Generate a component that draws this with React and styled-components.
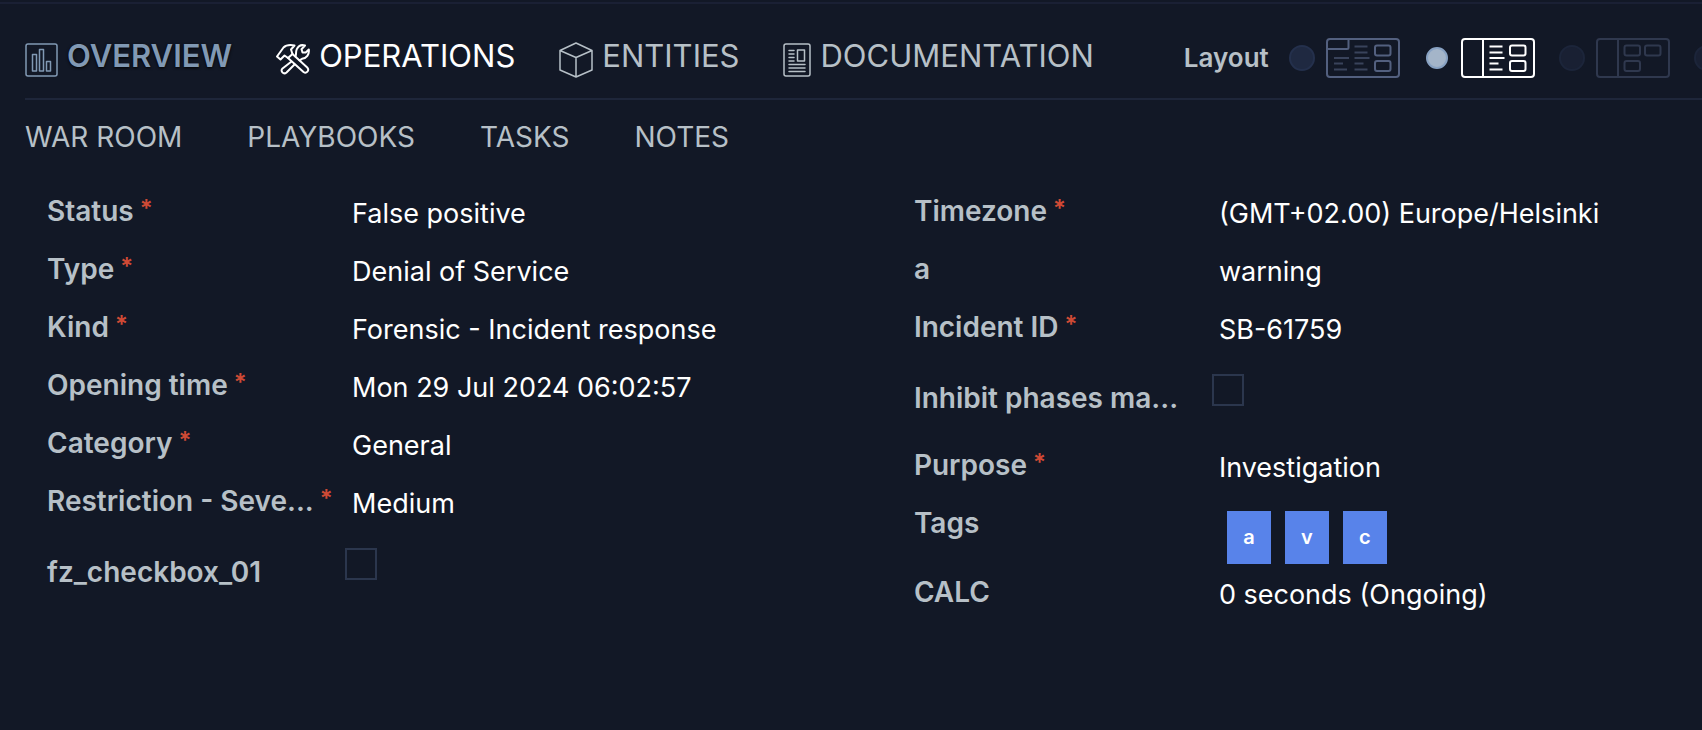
import React from 'react';
import styled, { createGlobalStyle } from 'styled-components';

const color = {
  page: '#121826',
  line: '#1e263a',
  muted: '#b7c0c7',
  accent: '#8199b4',
  required: '#cf4a35',
  box: '#2b364d',
  tag: '#5883ea',
};

const GlobalStyle = createGlobalStyle`
  * { box-sizing: border-box; }
  body {
    margin: 0;
    min-height: 100vh;
    overflow-x: hidden;
    background: ${color.page};
    color: #fff;
    font-family: Inter, Roboto, sans-serif;
  }
`;

const Page = styled.main`
  margin-top: 2px;
  border-top: 2px solid #1a2034;
  overflow: hidden;
`;

const Header = styled.header`
  display: flex;
  align-items: center;
  margin-left: 25px;
  padding: 14px 0 0;
  height: 96px;
  border-bottom: 2px solid ${color.line};
`;

const Tabs = styled.nav`
  display: flex;
  flex: none;
  gap: 44px;
`;

const Tab = styled.a`
  display: flex;
  align-items: center;
  gap: 9px;
  color: ${(p) => p.$color};
  font-size: 31px;
  line-height: 40px;
  font-weight: ${(p) => (p.$bold ? 600 : 400)};
  text-decoration: none;
  text-shadow: ${(p) => (p.$bold ? '0 1px 3px #000' : 'none')};
  white-space: nowrap;
`;

const TabIcon = styled.svg`
  flex: none;
  margin-top: 3px;
  height: 36px;
  width: ${(p) => p.$width}px;
  fill: none;
  stroke: currentColor;
  stroke-width: ${(p) => p.$stroke || 1.5};
  stroke-linejoin: round;
  stroke-linecap: round;
`;

const TabText = styled.span`
  padding-bottom: 4px;
`;

const LayoutPicker = styled.fieldset`
  display: flex;
  flex: none;
  align-items: center;
  gap: 24px;
  margin: 0 0 0 90px;
  padding: 0;
  border: 0;
`;

const LayoutTitle = styled.span`
  margin-right: -4px;
  color: ${color.muted};
  font-size: 26px;
  line-height: 32px;
  font-weight: 600;
`;

const LayoutOption = styled.label`
  display: flex;
  align-items: center;
  gap: 11px;
  color: ${(p) => p.$color};
`;

const Radio = styled.input`
  appearance: none;
  width: 26px;
  height: 26px;
  margin: 0;
  border: 2px solid #24304c;
  border-radius: 50%;
  background: #1f2941;

  &:checked {
    width: 22px;
    height: 22px;
    margin: 0 2px;
    border-color: #88a2c3;
    background: #a4b5c9;
  }

  &:disabled {
    border-color: #1c253a;
    background: #192033;
  }
`;

const LayoutDrawing = styled.svg`
  width: 74px;
  height: 40px;
  fill: none;
  stroke: currentColor;
  stroke-width: 2;
`;

const SubTabs = styled.nav`
  display: flex;
  gap: 65px;
  padding: 20px 0 40px 25px;
`;

const SubTab = styled.a`
  color: ${color.muted};
  font-size: 28px;
  line-height: 34px;
  text-decoration: none;
  white-space: nowrap;
`;

const Fields = styled.section`
  display: grid;
  grid-template-columns: minmax(0, 11fr) minmax(0, 10fr);
  padding-left: 47px;
`;

const Column = styled.div`
  display: flex;
  flex-direction: column;
`;

const rowHeight = { text: 58, check: 80, tags: 69 };

const Row = styled.div`
  display: grid;
  grid-template-columns: 298px minmax(0, 1fr);
  min-height: ${(p) => rowHeight[p.$kind]}px;
  align-items: start;
`;

const Label = styled.label`
  display: flex;
  align-items: flex-start;
  gap: 6px;
  padding-top: ${(p) => (p.$kind === 'check' ? 13 : 0)}px;
  color: ${color.muted};
  font-size: 28px;
  line-height: 34px;
  font-weight: 600;
  white-space: nowrap;
`;

const Required = styled.span`
  color: ${color.required};
  font-size: 24px;
  line-height: 30px;
`;

const Value = styled.output`
  padding: 3px 0 0 7px;
  font-size: 27px;
  line-height: 34px;
  white-space: nowrap;
`;

const Checkbox = styled.input`
  appearance: none;
  width: 32px;
  height: 32px;
  margin: 6px 0 0;
  border: 2px solid ${color.box};
  background: transparent;
`;

const TagList = styled.output`
  display: flex;
  gap: 14px;
  padding: 5px 0 0 15px;
`;

const Tag = styled.span`
  min-width: 44px;
  padding: 0 12px;
  background: ${color.tag};
  font-size: 20px;
  line-height: 53px;
  font-weight: 600;
  text-align: center;
`;

function OverviewIcon() {
  return (
    <TabIcon $width={33} viewBox="0 0 33 36" aria-hidden="true">
      <rect x="1" y="2" width="31" height="32" rx="2" />
      <path d="M7.5 12.5h4v16.5h-4zM14.5 7.5h4V29h-4zM21.5 19.5h4V29h-4z" />
    </TabIcon>
  );
}

function OperationsIcon() {
  return (
    <TabIcon $width={34} $stroke={2} viewBox="0 0 34 36" aria-hidden="true">
      <path d="M1 14.5 7.5 5.5C9.5 3.5 14 2.7 18.5 3.5L15 7.5 16.5 12 12 16 8.5 13.5 4.5 17.5z" />
      <path d="M16.5 12 31.5 25.8C33.5 28.5 30.5 32 27.5 30L12 16" />
      <path d="M15.5 19.5 6.500 26.5C3.8 29 7.5 33 10.500 30.5L18.500 22.500" />
      <path d="M19.500 14.500C20.5 12 19.5 10 20.800 7.200C22.300 4 25.500 2.500 29 3.500L25.500 7.200 26.500 10.500 29.700 10.500 32.800 7.500C33.500 12.500 30.500 16.500 26 16.800L23.500 18.300" />
    </TabIcon>
  );
}

function EntitiesIcon() {
  return (
    <TabIcon $width={34} viewBox="0 0 34 36" aria-hidden="true">
      <path d="M17 1 33 8.500V28L17 35 1 28V8.500zM1 8.500l16 7L33 8.500M17 15.500v19.500" />
    </TabIcon>
  );
}

function DocumentationIcon() {
  return (
    <TabIcon $width={28} viewBox="0 0 28 36" aria-hidden="true">
      <rect x="1" y="2" width="26" height="32" rx="2" />
      <path d="M14.5 8h7v11h-7zM6 8.5h5M6 12h5M6 15.5h5M6 19h5M6 22.5h16M6 26h16M6 29.5h16" />
    </TabIcon>
  );
}

function TabbedLayout() {
  return (
    <LayoutDrawing viewBox="0 0 74 40" aria-hidden="true">
      <rect x="1" y="1" width="72" height="38" rx="3" />
      <path d="M1 11h20q1.5 0 1.5-1.5V1" />
      <rect x="49" y="7.5" width="15.5" height="10" rx="2" />
      <rect x="49" y="23" width="15.5" height="10" rx="2" />
      <path strokeOpacity=".6" d="M8 20h15M8 25.5h9M8 31.5h13M28.5 8.5h13M28.5 14.5h13M28.5 20h15M28.5 25.5h9M28.5 31.5h13" />
    </LayoutDrawing>
  );
}

function SidebarTextLayout() {
  return (
    <LayoutDrawing viewBox="0 0 74 40" aria-hidden="true">
      <rect x="1" y="1" width="72" height="38" rx="3" />
      <path d="M22 1v38" />
      <rect x="49" y="7.5" width="15.5" height="10" rx="2" />
      <rect x="49" y="23" width="15.5" height="10" rx="2" />
      <path d="M28.5 8.5h13M28.5 14.5h13M28.5 20h15M28.5 25.5h9M28.5 31.5h13" />
    </LayoutDrawing>
  );
}

function SidebarCardsLayout() {
  return (
    <LayoutDrawing viewBox="0 0 74 40" aria-hidden="true">
      <rect x="1" y="1" width="72" height="38" rx="3" />
      <path d="M22 1v38" />
      <rect x="28.5" y="7.5" width="15.5" height="10" rx="2" />
      <rect x="49" y="7.5" width="15.5" height="10" rx="2" />
      <rect x="28.5" y="23" width="15.5" height="10" rx="2" />
    </LayoutDrawing>
  );
}

const tabs = [
  { name: 'OVERVIEW', Icon: OverviewIcon, color: color.accent, bold: true },
  { name: 'OPERATIONS', Icon: OperationsIcon, color: '#fff' },
  { name: 'ENTITIES', Icon: EntitiesIcon, color: color.muted },
  { name: 'DOCUMENTATION', Icon: DocumentationIcon, color: color.muted },
];

const layouts = [
  { name: 'Tabbed', Drawing: TabbedLayout, color: '#53607f' },
  { name: 'Sidebar and text', Drawing: SidebarTextLayout, color: '#fff', checked: true },
  { name: 'Sidebar and cards', Drawing: SidebarCardsLayout, color: '#2f384e', disabled: true },
  { name: 'Cards', Drawing: SidebarCardsLayout, color: '#2f384e', disabled: true },
];

const subTabs = ['WAR ROOM', 'PLAYBOOKS', 'TASKS', 'NOTES'];

const columns = [
  [
    { label: 'Status', required: true, value: 'False positive' },
    { label: 'Type', required: true, value: 'Denial of Service' },
    { label: 'Kind', required: true, value: 'Forensic - Incident response' },
    { label: 'Opening time', required: true, value: 'Mon 29 Jul 2024 06:02:57' },
    { label: 'Category', required: true, value: 'General' },
    { label: 'Restriction - Seve...', required: true, value: 'Medium' },
    { label: 'fz_checkbox_01', kind: 'check' },
  ],
  [
    { label: 'Timezone', required: true, value: '(GMT+02.00) Europe/Helsinki' },
    { label: 'a', value: 'warning' },
    { label: 'Incident ID', required: true, value: 'SB-61759' },
    { label: 'Inhibit phases ma...', kind: 'check' },
    { label: 'Purpose', required: true, value: 'Investigation' },
    { label: 'Tags', kind: 'tags', value: ['a', 'v', 'c'] },
    { label: 'CALC', value: '0 seconds (Ongoing)' },
  ],
];

function Field({ id, label, required, value, kind = 'text' }) {
  return (
    <Row $kind={kind}>
      <Label htmlFor={id} $kind={kind}>
        {label}
        {required && <Required>*</Required>}
      </Label>
      {kind === 'text' && <Value id={id}>{value}</Value>}
      {kind === 'check' && <Checkbox id={id} type="checkbox" />}
      {kind === 'tags' && (
        <TagList id={id}>
          {value.map((tag) => (
            <Tag key={tag}>{tag}</Tag>
          ))}
        </TagList>
      )}
    </Row>
  );
}

export default function App() {
  return (
    <>
      <GlobalStyle />
      <Page>
        <Header>
          <Tabs>
            {tabs.map(({ name, Icon, color: tabColor, bold }) => (
              <Tab key={name} href="#" $color={tabColor} $bold={bold}>
                <Icon />
                <TabText>{name}</TabText>
              </Tab>
            ))}
          </Tabs>
          <LayoutPicker>
            <LayoutTitle>Layout</LayoutTitle>
            {layouts.map(({ name, Drawing, color: drawingColor, checked, disabled }) => (
              <LayoutOption key={name} $color={drawingColor}>
                <Radio type="radio" name="layout" aria-label={name} defaultChecked={checked} disabled={disabled} />
                <Drawing />
              </LayoutOption>
            ))}
          </LayoutPicker>
        </Header>
        <SubTabs>
          {subTabs.map((name) => (
            <SubTab key={name} href="#">{name}</SubTab>
          ))}
        </SubTabs>
        <Fields>
          {columns.map((fields, column) => (
            <Column key={column}>
              {fields.map((field, index) => (
                <Field key={field.label} id={`field-${column}-${index}`} {...field} />
              ))}
            </Column>
          ))}
        </Fields>
      </Page>
    </>
  );
}
